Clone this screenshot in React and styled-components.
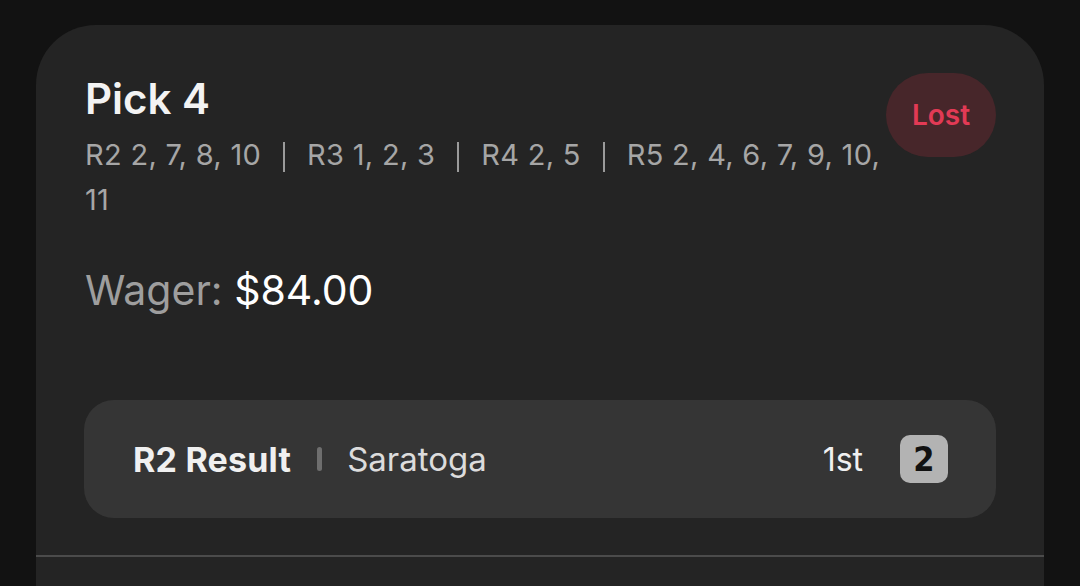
import React from 'react';
import styled, { createGlobalStyle } from 'styled-components';

const Global = createGlobalStyle`
  html, body {
    margin: 0;
    padding: 0;
    background: #121212;
    overflow: hidden;
  }
  body {
    font-family: Inter, "Noto Sans", "Liberation Sans", sans-serif;
    -webkit-font-smoothing: antialiased;
  }
`;

const UI = {
  Page: styled.div`
    height: 586px;
    padding-top: 25px;
    box-sizing: border-box;
  `,
  Card: styled.div`
    margin: 0 36px;
    height: 640px;
    background: #242424;
    border-radius: 60px 60px 0 0;
    padding-top: 48px;
    box-sizing: border-box;
  `,
  Body: styled.div`
    padding: 0 48px 0 49px;
  `,
  Header: styled.div`
    display: flex;
    align-items: flex-start;
    justify-content: space-between;
  `,
  Info: styled.div`
    flex: 1;
    min-width: 0;
  `,
  Title: styled.div`
    font-size: 42px;
    line-height: 52px;
    font-weight: 600;
    color: #f3f3f3;
  `,
  Legs: styled.div`
    margin-top: 7px;
    font-size: 29px;
    line-height: 45px;
    letter-spacing: 0.3px;
    color: #a6a6a6;
  `,
  Leg: styled.span``,
  Sep: styled.span`
    display: inline-block;
    width: 2px;
    height: 30px;
    margin: 0 22px;
    background: #9a9a9a;
    vertical-align: -7px;
  `,
  Status: styled.div`
    flex-shrink: 0;
    width: 110px;
    height: 84px;
    border-radius: 42px;
    background: #47262a;
    color: #e23a55;
    font-size: 28px;
    font-weight: 600;
    display: flex;
    align-items: center;
    justify-content: center;
  `,
  Wager: styled.div`
    margin-top: 43px;
    font-size: 41px;
    line-height: 50px;
    color: #9e9e9e;
  `,
  Amount: styled.span`
    color: #ffffff;
  `,
  Result: styled.div`
    margin-top: 85px;
    height: 118px;
    border-radius: 30px;
    background: #353535;
    display: flex;
    align-items: center;
    padding: 0 48px 0 49px;
    margin-left: -1px;
  `,
  Race: styled.div`
    font-size: 34px;
    font-weight: 700;
    letter-spacing: 0.2px;
    color: #f0f0f0;
  `,
  Dot: styled.span`
    width: 5px;
    height: 24px;
    border-radius: 3px;
    background: #6e6e6e;
    margin: 0 25px 0 26px;
  `,
  Track: styled.div`
    font-size: 33px;
    color: #dcdcdc;
    flex: 1;
  `,
  Place: styled.div`
    font-size: 32px;
    color: #f0f0f0;
    margin-right: 37px;
  `,
  Number: styled.div`
    width: 48px;
    height: 48px;
    border-radius: 10px;
    background: #b3b3b3;
    color: #111111;
    font-family: "DejaVu Sans Condensed", "DejaVu Sans", sans-serif;
    font-weight: 700;
    font-size: 34px;
    display: flex;
    align-items: center;
    justify-content: center;
  `,
  Divider: styled.div`
    margin-top: 37px;
    height: 2px;
    background: #4b4b4b;
  `,
};

const legs = [
  { race: 'R2', picks: '2, 7, 8, 10' },
  { race: 'R3', picks: '1, 2, 3' },
  { race: 'R4', picks: '2, 5' },
  { race: 'R5', picks: '2, 4, 6, 7, 9, 10, 11' },
];

export default function App() {
  return (
    <UI.Page>
      <Global />
      <UI.Card>
        <UI.Body>
          <UI.Header>
            <UI.Info>
              <UI.Title>Pick 4</UI.Title>
              <UI.Legs>
                {legs.map((leg, i) => (
                  <React.Fragment key={leg.race}>
                    {i > 0 && <UI.Sep />}
                    <UI.Leg>{`${leg.race} ${leg.picks}`}</UI.Leg>
                  </React.Fragment>
                ))}
              </UI.Legs>
            </UI.Info>
            <UI.Status>Lost</UI.Status>
          </UI.Header>
          <UI.Wager>
            Wager: <UI.Amount>$84.00</UI.Amount>
          </UI.Wager>
          <UI.Result>
            <UI.Race>R2 Result</UI.Race>
            <UI.Dot />
            <UI.Track>Saratoga</UI.Track>
            <UI.Place>1st</UI.Place>
            <UI.Number>2</UI.Number>
          </UI.Result>
        </UI.Body>
        <UI.Divider />
      </UI.Card>
    </UI.Page>
  );
}
